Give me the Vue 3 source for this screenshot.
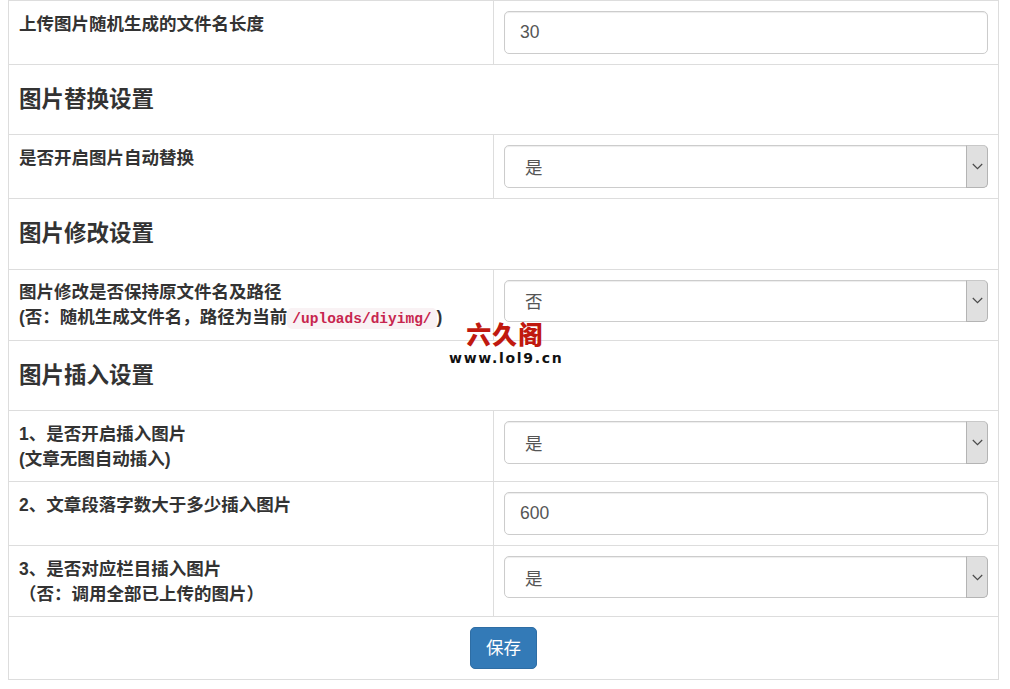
<script setup>
const rows = [
  { id: 'len', type: 'input', lines: ['上传图片随机生成的文件名长度'], value: '30' },
  { id: 'h1', type: 'heading', title: '图片替换设置' },
  { id: 'auto', type: 'select', lines: ['是否开启图片自动替换'], value: '是' },
  { id: 'h2', type: 'heading', title: '图片修改设置' },
  { id: 'keep', type: 'select', lines: ['图片修改是否保持原文件名及路径'], code: true, value: '否' },
  { id: 'h3', type: 'heading', title: '图片插入设置' },
  { id: 'ins', type: 'select', lines: ['1、是否开启插入图片', '(文章无图自动插入)'], value: '是' },
  { id: 'num', type: 'input', lines: ['2、文章段落字数大于多少插入图片'], value: '600' },
  { id: 'cat', type: 'select', lines: ['3、是否对应栏目插入图片', '（否：调用全部已上传的图片）'], value: '是' },
]
</script>

<template>
  <div class="page">
    <table class="settings">
      <colgroup>
        <col class="col-label" />
        <col />
      </colgroup>
      <tbody>
        <tr v-for="row in rows" :key="row.id">
          <td v-if="row.type === 'heading'" colspan="2">
            <h4 class="heading">{{ row.title }}</h4>
          </td>
          <template v-else>
            <td class="label" :class="{ 'label-code': row.code }">
              <template v-for="(line, i) in row.lines" :key="i">
                <br v-if="i" />{{ line }}
              </template>
              <template v-if="row.code">
                <br />(否：随机生成文件名，路径为当前<code class="path">/uploads/diyimg/</code>)
              </template>
            </td>
            <td>
              <input v-if="row.type === 'input'" class="control" type="text" :value="row.value" />
              <div v-else class="select-wrap">
                <select class="control select">
                  <option>{{ row.value }}</option>
                </select>
                <span class="arrow">
                  <svg width="11" height="7" viewBox="0 0 11 7" fill="none" stroke="#4a4a4a" stroke-width="1.2">
                    <path d="M0.8 1 L5.5 5.7 L10.2 1" />
                  </svg>
                </span>
              </div>
            </td>
          </template>
        </tr>
        <tr>
          <td colspan="2" class="actions">
            <button class="save" type="button">保存</button>
          </td>
        </tr>
      </tbody>
    </table>
    <div class="watermark">
      <div class="mark-name">六久阁</div>
      <div class="mark-url">www.lol9.cn</div>
    </div>
  </div>
</template>

<style scoped>
.page {
  position: relative;
  width: 991px;
  margin-left: 8px;
  font-family: "Liberation Sans", "Noto Sans CJK SC", sans-serif;
  font-size: 17.5px;
  line-height: 25px;
  color: #333;
}
.settings {
  width: 100%;
  border-collapse: collapse;
  table-layout: fixed;
}
.col-label {
  width: 485px;
}
td {
  border: 1px solid #ddd;
  padding: 10px;
  vertical-align: top;
}
.label {
  padding: 11px 10px 9px;
  font-weight: 700;
}
.label-code {
  padding: 10px;
}
.heading {
  margin: 13.5px 0 11.5px;
  font-size: 22.5px;
  line-height: 24.75px;
  font-weight: 700;
}
.control {
  display: block;
  box-sizing: border-box;
  width: 100%;
  height: 42.5px;
  padding: 7px 15px;
  border: 1px solid #ccc;
  border-radius: 5px;
  background: #fff;
  color: #555;
  font: inherit;
  box-shadow: inset 0 1px 1px rgba(0, 0, 0, 0.075);
}
.select-wrap {
  position: relative;
}
.select {
  appearance: none;
  padding: 9px 15px 5px 20px;
}
.arrow {
  position: absolute;
  top: 0;
  right: 0;
  bottom: 0;
  width: 22px;
  display: flex;
  align-items: center;
  justify-content: center;
  box-sizing: border-box;
  background: #e0e0e0;
  border: 1px solid #b4b4b4;
  border-top-color: #c8c8c8;
  border-radius: 0 5px 5px 0;
  pointer-events: none;
}
.path {
  padding: 2.5px 5px;
  border-radius: 5px;
  background: #f9f2f4;
  color: #c7254e;
  font-family: "Liberation Mono", monospace;
  font-size: 14.5px;
  line-height: 1;
}
.actions {
  text-align: center;
}
.save {
  height: 42.5px;
  padding: 0 15px;
  border: 1px solid #2e6da4;
  border-radius: 5px;
  background: #337ab7;
  color: #fff;
  font: inherit;
}
.watermark {
  position: absolute;
  left: 441px;
  top: 320px;
  width: 113px;
  text-align: center;
}
.mark-name {
  color: #c0190f;
  font-size: 25px;
  line-height: 30px;
  font-weight: 900;
  letter-spacing: 0.8px;
  margin-left: -1px;
}
.mark-url {
  color: #111;
  font-family: "DejaVu Sans", sans-serif;
  font-size: 14px;
  line-height: 16px;
  font-weight: 700;
  letter-spacing: 1.7px;
  white-space: nowrap;
}
</style>
